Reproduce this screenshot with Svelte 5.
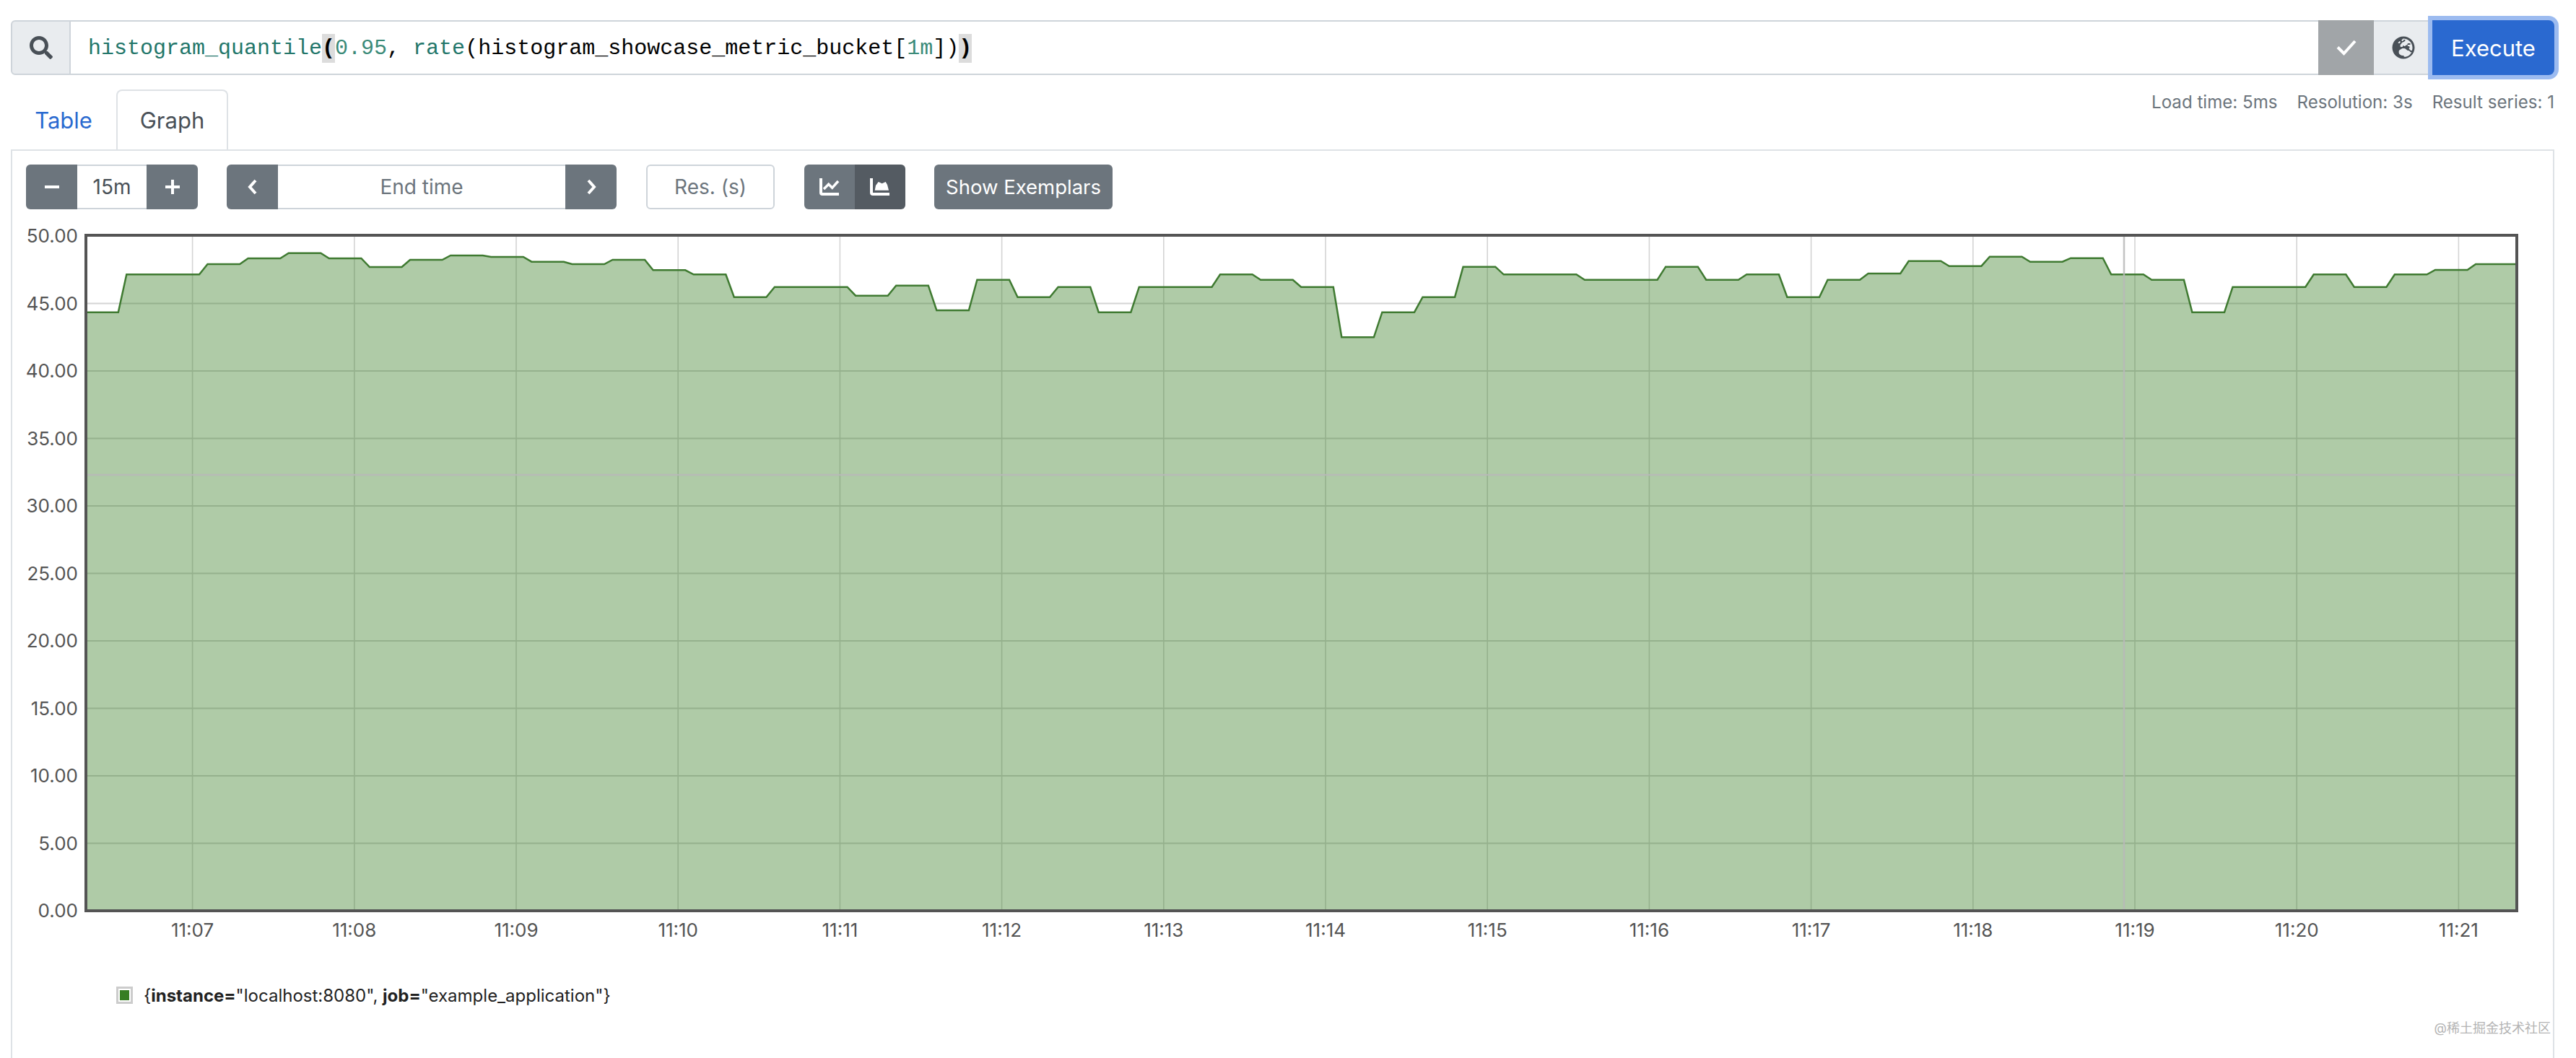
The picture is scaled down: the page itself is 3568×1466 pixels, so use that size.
<script lang="ts">
	// plot box in page pixels, the svg viewBox below uses the same numbers
	const left = 119;
	const right = 3486;
	const yZero = 1262;
	const yTop = 327;

	const yTicks = [0, 5, 10, 15, 20, 25, 30, 35, 40, 45, 50];
	const xTicks = ['11:07', '11:08', '11:09', '11:10', '11:11', '11:12', '11:13', '11:14', '11:15', '11:16', '11:17', '11:18', '11:19', '11:20', '11:21'];

	const yFor = (v: number) => yZero - (v / 50) * (yZero - yTop);
	const xFor = (i: number) => 266.6 + i * 224.2;

	// value changes every 15s, the ramp between two levels is one 3s sample
	const stepWidth = 56.1;
	const rampWidth = 11.5;
	const firstRamp = 163.8;

	// pixel rows of each 15s level, measured against y = 310
	const initial = 368;
	const levels = [
		211, 211, 168, 144, 122, 144, 180, 150, 132, 138, 158, 168, 150, 193, 211, 305, 263, 263, 299, 257,
		360, 233, 305, 263, 368, 263, 263, 211, 233, 263, 472, 368, 305, 179, 211, 211, 233, 233, 179, 233,
		211, 305, 233, 207, 155, 176, 137, 158, 143, 211, 233, 368, 263, 263, 211, 263, 211, 192, 168
	];
	const row = (v: number) => 310 + v / 3;

	function buildLine() {
		const pts: [number, number][] = [[left, row(initial)]];
		let prev = initial;
		levels.forEach((level, k) => {
			const x = firstRamp + k * stepWidth;
			pts.push([x, row(prev)]);
			pts.push([Math.min(x + rampWidth, right), row(level)]);
			prev = level;
		});
		pts.push([right, row(prev)]);
		return pts;
	}

	const line = buildLine();
	const linePath = line.map((p) => `${p[0].toFixed(1)},${p[1].toFixed(1)}`).join(' ');
	const areaPath = `${left},${yZero} ${linePath} ${right},${yZero}`;
</script>

<div class="page">
	<div class="expression">
		<span class="prepend">
			<svg class="icon search" viewBox="0 0 512 512"><path d="M505 442.7L405.3 343c-4.5-4.5-10.6-7-17-7H372c27.6-35.3 44-79.7 44-128C416 93.1 322.9 0 208 0S0 93.1 0 208s93.1 208 208 208c48.3 0 92.7-16.4 128-44v16.3c0 6.4 2.5 12.5 7 17l99.7 99.7c9.4 9.4 24.6 9.4 33.9 0l28.3-28.3c9.4-9.4 9.4-24.6.1-34zM208 336c-70.7 0-128-57.2-128-128 0-70.7 57.2-128 128-128 70.7 0 128 57.2 128 128 0 70.7-57.2 128-128 128z"/></svg>
		</span>
		<div class="editor">
			<span class="fn">histogram_quantile</span><span class="match">(</span><span class="num">0.95</span>, <span class="fn">rate</span>(histogram_showcase_metric_bucket[<span class="num">1m</span>])<span class="match">)</span>
		</div>
		<span class="check">
			<svg class="line-icon check-icon" viewBox="0 0 28 22"><path d="M2 10.5L10.5 19L26 2"/></svg>
		</span>
		<span class="globe">
			<svg class="icon globe-icon" viewBox="0 0 496 512"><path d="M248 8C111 8 0 119 0 256s111 248 248 248 248-111 248-248S385 8 248 8zm200 248c0 22.5-3.9 44.2-10.8 64.4h-20.3c-4.3 0-8.4-1.7-11.4-4.8l-32-32.6c-4.5-4.6-4.5-12.1.1-16.7l12.5-12.5v-8.7c0-3-1.2-5.9-3.3-8l-9.4-9.4c-2.1-2.1-5-3.3-8-3.3h-16c-6.2 0-11.3-5.1-11.3-11.3 0-3 1.2-5.9 3.3-8l9.4-9.4c2.1-2.1 5-3.3 8-3.3h32c6.2 0 11.3-5.1 11.3-11.3v-9.4c0-6.2-5.1-11.3-11.3-11.3h-36.7c-8.8 0-16 7.2-16 16v4.5c0 6.9-4.4 13-10.9 15.2l-31.6 10.5c-3.3 1.1-5.5 4.1-5.5 7.6v2.2c0 4.4-3.6 8-8 8h-16c-4.4 0-8-3.6-8-8s-3.6-8-8-8H247c-3 0-5.8 1.7-7.2 4.4l-9.4 18.7c-2.7 5.4-8.2 8.8-14.3 8.8H194c-8.8 0-16-7.2-16-16V199c0-4.2 1.7-8.3 4.7-11.3l20.1-20.1c4.6-4.6 7.2-10.9 7.2-17.5 0-3.4 2.2-6.5 5.5-7.6l40-13.3c1.7-.6 3.2-1.5 4.4-2.7l26.8-26.8c2.1-2.1 3.3-5 3.3-8 0-6.2-5.1-11.3-11.3-11.3H258l-16 16v8c0 4.4-3.6 8-8 8h-16c-4.4 0-8-3.6-8-8v-20c0-2.5 1.2-4.9 3.2-6.4l28.9-21.7c1.9-.1 3.8-.3 5.7-.3C358.3 56 448 145.7 448 256zM130.1 149.1c0-3 1.2-5.9 3.3-8l25.4-25.4c2.1-2.1 5-3.3 8-3.3 6.2 0 11.3 5.1 11.3 11.3v16c0 3-1.2 5.9-3.3 8l-9.4 9.4c-2.1 2.1-5 3.3-8 3.3h-16c-6.2 0-11.3-5.1-11.3-11.4zm128 306.4v-7.1c0-8.8-7.2-16-16-16h-20.2c-10.8 0-26.7-5.3-35.4-11.8l-22.2-16.7c-11.5-8.6-18.2-22.1-18.2-36.4v-23.9c0-16 8.4-30.8 22.1-39l42.9-25.7c7.1-4.2 15.2-6.5 23.4-6.5h31.2c10.9 0 21.4 3.9 29.6 10.9l43.2 37.1h18.3c8.5 0 16.6 3.4 22.6 9.4l17.3 17.3c5.3 5.3 12.5 8.3 20 8.3h13.3c-27.9 60.8-87.4 102.8-156.1 106.4z"/></svg>
		</span>
		<button class="execute">Execute</button>
	</div>

	<div class="tabs-row">
		<div class="tabs">
			<span class="tab link">Table</span>
			<span class="tab active">Graph</span>
		</div>
		<div class="stats">
			<span>Load time: 5ms</span>
			<span>Resolution: 3s</span>
			<span>Result series: 1</span>
		</div>
	</div>

	<div class="panel">
		<div class="controls">
			<div class="group range">
				<button class="btn" aria-label="shrink range"><svg class="line-icon pm" viewBox="0 0 24 24"><path d="M2 12H22"/></svg></button>
				<span class="field value">15m</span>
				<button class="btn" aria-label="grow range"><svg class="line-icon pm" viewBox="0 0 24 24"><path d="M2 12H22M12 2V22"/></svg></button>
			</div>
			<div class="group endtime">
				<button class="btn" aria-label="earlier"><svg class="line-icon chev" viewBox="0 0 14 22"><path d="M11 2L3 11L11 20"/></svg></button>
				<span class="field placeholder">End time</span>
				<button class="btn" aria-label="later"><svg class="line-icon chev" viewBox="0 0 14 22"><path d="M3 2L11 11L3 20"/></svg></button>
			</div>
			<span class="res placeholder">Res. (s)</span>
			<div class="group kinds">
				<button class="btn kind" aria-label="lines">
					<svg class="line-icon chart" viewBox="0 0 28 24"><path class="axis" d="M2 0V20Q2 22 4 22H27"/><path class="trace" d="M6 15L12.7 8.3L17.7 13.3L26 4"/></svg>
				</button>
				<button class="btn kind on" aria-label="stacked">
					<svg class="line-icon chart" viewBox="0 0 28 24"><path class="axis" d="M2 0V20Q2 22 4 22H27"/><path class="hill" d="M6.7 16.7L8 10L11.7 5L16.7 7.3L21.7 5L24 9L26 16.7Z"/></svg>
				</button>
			</div>
			<button class="btn exemplars">Show Exemplars</button>
		</div>

		<svg class="chart-svg" viewBox="17 310 3500 1000" width="3500" height="1000">
			{#each yTicks as t}
				{#if t > 0 && t < 50}
					<line class="grid" x1={left} x2={right} y1={yFor(t)} y2={yFor(t)} />
				{/if}
				<text class="tick" x="108" y={yFor(t) + 9} text-anchor="end">{t.toFixed(2)}</text>
			{/each}
			{#each xTicks as label, i}
				<line class="grid upright" x1={xFor(i)} x2={xFor(i)} y1={yTop} y2={yZero} />
				<text class="tick" x={xFor(i)} y="1298" text-anchor="middle">{label}</text>
			{/each}
			<polygon class="area" points={areaPath} />
			<polyline class="series" points={linePath} />
			<!-- hover crosshair, drawn over the data like flot does -->
			<line class="cursor" x1="2942" x2="2942" y1={yTop} y2={yZero} />
			<line class="cursor" x1={left} x2={right} y1="658" y2="658" />
			<rect class="frame" x="119" y="326" width="3367" height="936" />
		</svg>

		<div class="legend">
			<span class="swatch"><i></i></span>
			<span class="legend-text">&#123;<b>instance=</b>"localhost:8080", <b>job=</b>"example_application"&#125;</span>
		</div>

		<span class="watermark">@稀土掘金技术社区</span>
	</div>
</div>

<style>
	:global(body) {
		margin: 0;
		background: #fff;
		font-family: Inter, "Liberation Sans", sans-serif;
	}

	.page {
		height: 1466px;
		box-sizing: border-box;
		padding: 28px 30px 0 15px;
		overflow: hidden;
		display: flex;
		flex-direction: column;
	}

	button {
		border: 0;
		margin: 0;
		font-family: inherit;
	}

	.icon {
		display: block;
		fill: currentColor;
	}

	.line-icon {
		display: block;
		fill: none;
		stroke: currentColor;
		stroke-width: 4;
	}

	.expression {
		display: flex;
		height: 76px;
	}

	.prepend {
		width: 83px;
		box-sizing: border-box;
		display: flex;
		align-items: center;
		justify-content: center;
		background: #e9ecef;
		border: 2px solid #ced4da;
		border-radius: 6px 0 0 6px;
		color: #495057;
	}

	.search {
		width: 32px;
		height: 32px;
	}

	.editor {
		flex: 1;
		border-top: 2px solid #ced4da;
		border-bottom: 2px solid #ced4da;
		padding-left: 24px;
		font-family: "Liberation Mono", monospace;
		font-size: 30px;
		line-height: 74px;
		height: 72px;
		color: #000;
		white-space: pre;
	}

	.fn {
		color: #22766a;
	}

	.num {
		color: #3a8a78;
	}

	.match {
		background: #dcdcdc;
		font-weight: 700;
		padding: 3px 0;
	}

	.check {
		width: 77px;
		display: flex;
		align-items: center;
		justify-content: center;
		background: #a1a5a8;
		color: #fff;
	}

	.check-icon {
		width: 28px;
		height: 22px;
	}

	.globe {
		width: 81px;
		box-sizing: border-box;
		display: flex;
		align-items: center;
		justify-content: center;
		background: #e9ecef;
		border-top: 2px solid #ced4da;
		border-bottom: 2px solid #ced4da;
		color: #495057;
	}

	.globe-icon {
		width: 32px;
		height: 32px;
	}

	.execute {
		position: relative;
		width: 169px;
		background: #2a69d0;
		color: #fff;
		font-size: 31px;
		border-radius: 0 8px 8px 0;
		box-shadow: 0 0 0 6px #9cbbf0;
	}

	.tabs-row {
		display: flex;
		justify-content: space-between;
		margin-top: 20px;
		height: 83px;
	}

	.tabs {
		display: flex;
	}

	.tab {
		width: 146px;
		box-sizing: border-box;
		padding-top: 22px;
		text-align: center;
		font-size: 31px;
		border: 2px solid transparent;
		border-bottom: 0;
		border-radius: 8px 8px 0 0;
	}

	.tab.link {
		color: #2a6ad0;
	}

	.tab.active {
		width: 155px;
		height: 85px;
		background: #fff;
		color: #495057;
		border-color: #dee2e6;
		position: relative;
	}

	.stats {
		display: flex;
		gap: 27px;
		font-size: 24.1px;
		color: #6c757d;
		padding-top: 3px;
		line-height: 30px;
	}

	.panel {
		position: relative;
		flex: 1;
		border: 2px solid #dee2e6;
		border-bottom: 0;
		padding: 19px 19px 0;
	}

	.controls {
		display: flex;
		height: 62px;
		font-size: 28px;
	}

	.group {
		display: flex;
	}

	.btn {
		width: 71px;
		display: flex;
		align-items: center;
		justify-content: center;
		background: #6c757d;
		color: #fff;
		padding: 0;
	}

	.group .btn:first-child {
		border-radius: 6px 0 0 6px;
	}

	.group .btn:last-child {
		border-radius: 0 6px 6px 0;
	}

	.field {
		box-sizing: border-box;
		display: flex;
		align-items: center;
		justify-content: center;
		border-top: 2px solid #ced4da;
		border-bottom: 2px solid #ced4da;
		background: #fff;
	}

	.value {
		width: 96px;
		color: #495057;
	}

	.endtime {
		margin-left: 40px;
	}

	.endtime .field {
		width: 398px;
	}

	.placeholder {
		color: #6c757d;
	}

	.res {
		box-sizing: border-box;
		width: 178px;
		margin-left: 41px;
		display: flex;
		align-items: center;
		justify-content: center;
		border: 2px solid #ced4da;
		border-radius: 6px;
	}

	.kinds {
		margin-left: 41px;
	}

	.kind {
		width: 70px;
	}

	.kind.on {
		background: #545b62;
	}

	.exemplars {
		width: 247px;
		margin-left: 40px;
		border-radius: 6px;
		font-size: 27.5px;
	}

	.pm {
		width: 24px;
		height: 24px;
	}

	.chev {
		width: 14px;
		height: 22px;
	}

	.chart {
		width: 28px;
		height: 24px;
	}

	.trace {
		stroke-width: 3.5;
	}

	.hill {
		fill: currentColor;
		stroke: none;
	}

	.chart-svg {
		display: block;
		margin: 20px 0 0 -19px;
	}

	.grid {
		stroke: #d4d4d4;
		stroke-width: 2;
	}

	.grid.upright {
		stroke-width: 1.6;
	}

	.cursor {
		stroke: rgba(184, 184, 184, 0.85);
		stroke-width: 2.5;
	}

	.area {
		fill: rgba(55, 126, 34, 0.4);
	}

	.series {
		fill: none;
		stroke: #3f7a31;
		stroke-width: 2.5;
	}

	.frame {
		fill: none;
		stroke: #545454;
		stroke-width: 4;
	}

	.tick {
		font-size: 26px;
		fill: #545454;
	}

	.legend {
		display: flex;
		align-items: center;
		gap: 15px;
		margin: 57px 0 0 125px;
		font-size: 24px;
		color: #222;
		white-space: pre;
		height: 24px;
	}

	.swatch {
		box-sizing: border-box;
		width: 23px;
		height: 24px;
		border: 3px solid #ccc;
		padding: 2px;
		background: #fff;
	}

	.swatch i {
		display: block;
		height: 100%;
		background: #377e22;
	}

	.watermark {
		position: absolute;
		right: 3px;
		top: 1201px;
		font-family: Inter, "Noto Sans CJK SC", sans-serif;
		font-size: 18px;
		color: #b4b4b4;
		white-space: nowrap;
	}
</style>
